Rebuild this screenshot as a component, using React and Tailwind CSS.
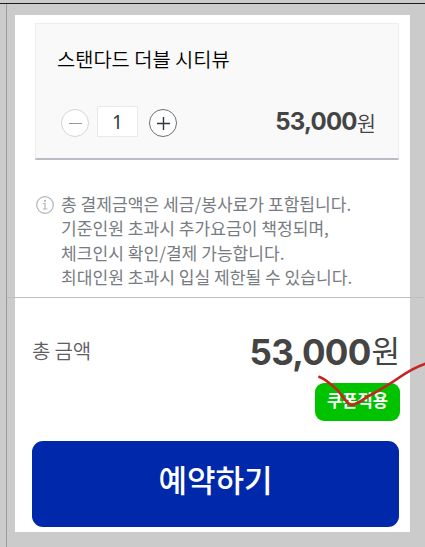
import React, { useState } from "react";

const notices = [
    "총 결제금액은 세금/봉사료가 포함됩니다.",
    "기준인원 초과시 추가요금이 책정되며,",
    "체크인시 확인/결제 가능합니다.",
    "최대인원 초과시 입실 제한될 수 있습니다.",
];

const PRICE = 53000;

export default function App() {
    const [count, setCount] = useState(1);
    const total = (PRICE * count).toLocaleString("en-US");

    return (
        <div className="relative flex h-[547px] w-[425px] flex-col overflow-hidden bg-[#cbcbcb] pt-[3px] font-['Noto_Sans_CJK_KR',sans-serif]">
            <div className="h-px w-full shrink-0 bg-[#1c1c1c]" />
            <div className="ml-[6px] mr-px flex-1 border-l border-[#979d9d] pt-[11px]">
                <div className="ml-2 flex h-[517px] w-[395px] flex-col bg-white pt-2">
                    {/* Room */}
                    <div className="ml-5 flex h-[137px] w-[364px] flex-col border border-b-2 border-[#ededed] border-b-[#babdc3] bg-[#f9f9f9]">
                        <p className="ml-[21px] mt-[20px] h-[30px] whitespace-nowrap text-[19.8px] leading-[30px] font-[350] text-black">
                            스탠다드 더블 시티뷰
                        </p>
                        <div className="mt-[32px] flex h-[31px] items-center pl-[25px] pr-[22px]">
                            <button
                                className="mt-[3px] flex size-7 items-center justify-center rounded-full border border-[#d5d5d5] bg-white"
                                onClick={() => setCount(Math.max(1, count - 1))}
                            >
                                <span className="h-px w-[13px] bg-[#96999c]" />
                            </button>
                            <span className="ml-2 flex h-[31px] w-[41px] items-center justify-center border border-[#e9e9e9] bg-white pt-px font-['Noto_Sans',sans-serif] text-[19px] text-[#30373f]">
                                {count}
                            </span>
                            <button
                                className="ml-[11px] mt-[3px] flex size-7 items-center justify-center rounded-full border border-[#6c6e70] bg-white"
                                onClick={() => setCount(count + 1)}
                            >
                                <svg width="13" height="13" viewBox="0 0 13 13" stroke="#30373f" strokeWidth="1.4">
                                    <path d="M0 6.5h13M6.5 0v13" />
                                </svg>
                            </button>
                            <div className="ml-auto flex items-center whitespace-nowrap text-[#444]">
                                <span className="font-['Inter',sans-serif] text-[24px] leading-[30px] font-bold tracking-[-0.8px]">{total}</span>
                                <span className="text-[21px] leading-[30px] font-[350]">원</span>
                            </div>
                        </div>
                    </div>

                    {/* Notices */}
                    <div className="flex h-[137px] items-start pl-[21px] pt-[32px]">
                        <svg className="mt-[4px] shrink-0" width="18" height="18" viewBox="0 0 18 18" fill="none" stroke="#b5b5b5" strokeWidth="1.2">
                            <circle cx="9" cy="9" r="8.3" />
                            <path d="M7 7.5h2v5.5M6.8 13h4.6" />
                            <circle cx="9" cy="4.9" r="0.5" />
                        </svg>
                        <div className="ml-[7px] whitespace-nowrap text-[17.1px] leading-[24.4px] text-[#777c82]">
                            {notices.map((line) => (
                                <p key={line}>{line}</p>
                            ))}
                        </div>
                    </div>

                    <div className="-ml-2 h-px w-[417px] shrink-0 bg-[#bfbfbf]" />

                    {/* Total */}
                    <div className="flex h-[85px] items-start justify-between pl-[17px] pr-[10px] pt-[34px] whitespace-nowrap">
                        <span className="text-[20px] leading-[38px] font-[350] tracking-[-0.2px] text-[#625c64]">총 금액</span>
                        <div className="flex items-center text-[#444]">
                            <span className="mr-px font-['Inter',sans-serif] text-[35px] leading-[40px] font-bold tracking-[-0.8px]">{total}</span>
                            <span className="-mt-1 text-[31px] leading-[40px]">원</span>
                        </div>
                    </div>
                    <div className="ml-[300px] flex h-[38px] w-[85px] items-start justify-center rounded-[9px] bg-[#00c300] pt-[5px] whitespace-nowrap text-[16.6px] leading-6 font-bold text-white">
                        쿠폰적용
                    </div>

                    <button className="ml-[17px] mt-5 flex h-[86px] w-[367px] items-center justify-center rounded-[11px] bg-[#0028ab] pb-[10px] text-[31px] font-medium text-white">
                        예약하기
                    </button>
                </div>
            </div>

            {/* Check stroke over the coupon */}
            <svg className="pointer-events-none absolute left-0 top-0" width="425" height="547" fill="none">
                <path d="M319.5 377C325 379 329 383 333 386C338 390 341 394 343 397C347 402 349 405 352 405C357 404 361 401 367 397C380 390 390 384 400 377Q413 368 426 363.5" stroke="#c92222" strokeWidth="2.7" strokeLinecap="round" />
            </svg>
        </div>
    );
}
